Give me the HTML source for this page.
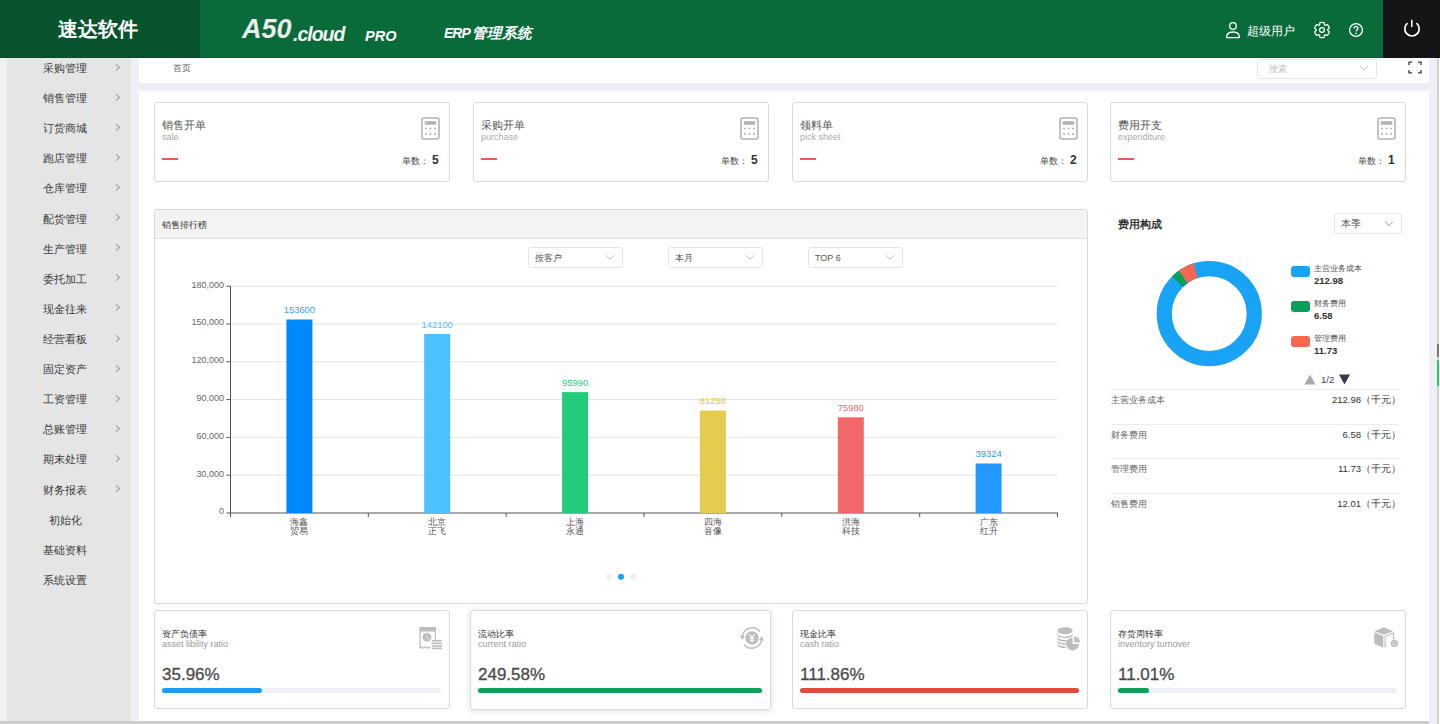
<!DOCTYPE html>
<html><head><meta charset="utf-8">
<style>
*{margin:0;padding:0;box-sizing:border-box}
html,body{width:1440px;height:724px;overflow:hidden;background:#fff;font-family:"Liberation Sans",sans-serif;color:#333}
.a{position:absolute}
#hdr{left:0;top:0;width:1440px;height:58px;background:#0a6b3a}
#logo{left:0;top:0;width:200px;height:58px;background:#07532e}
#pwr{left:1383px;top:0;width:57px;height:58px;background:#141414}
#lstrip{left:0;top:58px;width:7px;height:663px;background:#eef0f6}
#side{left:7px;top:58px;width:124px;height:663px;background:#e5e5e5}
#mstrip{left:131px;top:58px;width:8px;height:663px;background:#eef0f6}
#rstrip{left:1429px;top:58px;width:9px;height:666px;background:#eef0f6}
#rline{left:1437px;top:58px;width:2px;height:666px;background:#d0d0d0}
#botbar{left:0;top:721px;width:1429px;height:3px;background:#cdcdcd}
#bc{left:139px;top:58px;width:1290px;height:25px;background:#fff}
#gap{left:139px;top:83px;width:1290px;height:8px;background:#eceff4}
#main{left:139px;top:91px;width:1290px;height:630px;background:#fff}
.si{position:absolute;left:7px;width:124px;height:30px;font-size:11px;line-height:31px;color:#3a3a3a}
.si span{position:absolute;left:0;width:116px;text-align:center;white-space:nowrap}
.si i{position:absolute;left:107px;top:11.5px;width:5px;height:5px;border-right:1px solid #999;border-top:1px solid #999;transform:rotate(45deg)}
.card{position:absolute;border:1px solid #d9d9d9;border-radius:3px;background:#fff}
</style></head><body>
<div class="a" id="hdr"></div>
<div class="a" id="logo"></div>
<div class="a" style="left:0;top:57px;width:1383px;height:1px;background:#04612a"></div><div class="a" style="left:0;top:57px;width:200px;height:1px;background:#034d23"></div><div class="a" id="pwr"></div>

<div class="a" style="left:58px;top:16px;font-size:20px;line-height:26px;font-weight:bold;color:#fff;letter-spacing:0px">速达软件</div>
<div class="a" style="left:242px;top:14px;font-size:27px;line-height:30px;font-weight:bold;font-style:italic;color:#ececec">A50</div>
<div class="a" style="left:293px;top:23px;font-size:19.5px;line-height:22px;font-weight:bold;font-style:italic;color:#f4f4f4;letter-spacing:-1px">.cloud</div>
<div class="a" style="left:365px;top:27px;font-size:14.5px;line-height:18px;font-weight:bold;font-style:italic;color:#fff">PRO</div>
<div class="a" style="left:444px;top:24px;font-size:14px;line-height:18px;font-weight:bold;font-style:italic;color:#fff;letter-spacing:-1px">ERP</div><div class="a" style="left:472px;top:24px;font-size:14.5px;line-height:18px;font-weight:bold;font-style:italic;color:#fff">管理系统</div>
<svg class="a" style="left:1224px;top:20px" width="18" height="20" viewBox="0 0 18 20"><circle cx="9" cy="6" r="3.3" fill="none" stroke="#fff" stroke-width="1.3"/><path d="M2.6 17.6C2.6 14 5.4 12 9 12S15.4 14 15.4 17.6Z" fill="none" stroke="#fff" stroke-width="1.3" stroke-linejoin="round"/></svg>
<div class="a" style="left:1247px;top:24px;font-size:12px;line-height:14px;color:#fff">超级用户</div>
<svg class="a" style="left:1312px;top:19.5px" width="20" height="20" viewBox="0 0 20 20"><path fill="none" stroke="#fff" stroke-width="1.2" stroke-linejoin="round" d="M7.55 4.97L7.91 2.69A7.6 7.6 0 0 1 12.09 2.69L12.45 4.97A5.6 5.6 0 0 1 13.13 5.36L13.13 5.36L15.28 4.53A7.6 7.6 0 0 1 17.37 8.16L15.59 9.61A5.6 5.6 0 0 1 15.59 10.39L15.59 10.39L17.37 11.84A7.6 7.6 0 0 1 15.28 15.47L13.13 14.64A5.6 5.6 0 0 1 12.45 15.03L12.45 15.03L12.09 17.31A7.6 7.6 0 0 1 7.91 17.31L7.55 15.03A5.6 5.6 0 0 1 6.87 14.64L6.87 14.64L4.72 15.47A7.6 7.6 0 0 1 2.63 11.84L4.41 10.39A5.6 5.6 0 0 1 4.41 9.61L4.41 9.61L2.63 8.16A7.6 7.6 0 0 1 4.72 4.53L6.87 5.36A5.6 5.6 0 0 1 7.55 4.97Z"/><circle cx="10" cy="10" r="2.4" fill="none" stroke="#fff" stroke-width="1.2"/></svg>
<svg class="a" style="left:1347px;top:21px" width="18" height="18" viewBox="0 0 18 18"><circle cx="9" cy="9" r="6.4" fill="none" stroke="#fff" stroke-width="1.3"/><path d="M7 7.5c0-1.3.9-2.1 2-2.1s2 .8 2 1.9c0 1.4-1.9 1.6-1.9 3.2" fill="none" stroke="#fff" stroke-width="1.2"/><circle cx="9.1" cy="12.4" r=".8" fill="#fff"/></svg>
<svg class="a" style="left:1402px;top:18px" width="20" height="20" viewBox="0 0 20 20"><path d="M5.57 5.13A7.2 7.2 0 1 0 14.43 5.13" fill="none" stroke="#fff" stroke-width="1.7"/><path d="M9.8 1.8v7.2" stroke="#fff" stroke-width="1.5"/></svg>
<div class="a" id="lstrip"></div>
<div class="a" id="side"></div>
<div class="si" style="top:53.0px"><span>采购管理</span><i></i></div>
<div class="si" style="top:83.1px"><span>销售管理</span><i></i></div>
<div class="si" style="top:113.2px"><span>订货商城</span><i></i></div>
<div class="si" style="top:143.3px"><span>跑店管理</span><i></i></div>
<div class="si" style="top:173.4px"><span>仓库管理</span><i></i></div>
<div class="si" style="top:203.6px"><span>配货管理</span><i></i></div>
<div class="si" style="top:233.7px"><span>生产管理</span><i></i></div>
<div class="si" style="top:263.8px"><span>委托加工</span><i></i></div>
<div class="si" style="top:293.9px"><span>现金往来</span><i></i></div>
<div class="si" style="top:324.0px"><span>经营看板</span><i></i></div>
<div class="si" style="top:354.1px"><span>固定资产</span><i></i></div>
<div class="si" style="top:384.2px"><span>工资管理</span><i></i></div>
<div class="si" style="top:414.3px"><span>总账管理</span><i></i></div>
<div class="si" style="top:444.4px"><span>期末处理</span><i></i></div>
<div class="si" style="top:474.5px"><span>财务报表</span><i></i></div>
<div class="si" style="top:504.6px"><span>初始化</span></div>
<div class="si" style="top:534.8px"><span>基础资料</span></div>
<div class="si" style="top:564.9px"><span>系统设置</span></div>
<div class="a" id="mstrip"></div>
<div class="a" id="rstrip"></div>
<div class="a" id="rline"></div>
<div class="a" id="botbar"></div><div class="a" style="left:1437px;top:344px;width:2px;height:13px;background:#777"></div><div class="a" style="left:1437px;top:360px;width:2px;height:26px;background:#2cc56f"></div>
<div class="a" id="bc"></div>
<div class="a" id="gap"></div>
<div class="a" id="main"></div>

<div class="a" style="left:173px;top:62px;font-size:9px;line-height:12px;color:#666">首页</div>
<div class="a" style="left:1257px;top:59px;width:120px;height:20px;border:1px solid #e4e7ed;border-radius:3px;background:#fff"></div>
<div class="a" style="left:1269px;top:63px;font-size:9px;line-height:12px;color:#c0c4cc">搜索</div>
<svg class="a" style="left:1359px;top:65px" width="10" height="7" viewBox="0 0 10 7"><path d="M1 1.2L5 5.2 9 1.2" fill="none" stroke="#b8bcc6" stroke-width="1"/></svg>
<svg class="a" style="left:1408px;top:61px" width="14" height="13" viewBox="0 0 14 13"><path d="M1 4V1.2h3M10 1.2h3V4M13 9v2.8h-3M4 11.8H1V9" fill="none" stroke="#3a3a3a" stroke-width="1.3"/></svg>
<div class="card" style="left:154px;top:102px;width:296px;height:80px"></div>
<div class="a" style="left:162px;top:118.5px;font-size:10.5px;line-height:13px;color:#555">销售开单</div>
<div class="a" style="left:162px;top:132px;font-size:9px;line-height:11px;color:#aaa">sale</div>
<div class="a" style="left:162px;top:158px;width:16px;height:2px;background:#ec5b57"></div>
<svg class="a" style="left:421px;top:117px" width="19" height="23" viewBox="0 0 19 23"><rect x="1" y="1" width="17" height="21" rx="2" fill="none" stroke="#b3b3b3" stroke-width="1.6"/><rect x="3.8" y="4.2" width="11.5" height="3.6" fill="#b3b3b3"/><g fill="#b3b3b3"><circle cx="5" cy="11.6" r="1"/><circle cx="9.5" cy="11.6" r="1"/><circle cx="14" cy="11.6" r="1"/><circle cx="5" cy="17" r="1"/><circle cx="9.5" cy="17" r="1"/><circle cx="14" cy="17" r="1"/></g></svg><div class="a" style="left:402px;top:155px;font-size:9px;line-height:12px;color:#444">单数：</div>
<div class="a" style="left:432px;top:153px;font-size:12px;line-height:14px;font-weight:bold;color:#333">5</div>
<div class="card" style="left:473px;top:102px;width:296px;height:80px"></div>
<div class="a" style="left:481px;top:118.5px;font-size:10.5px;line-height:13px;color:#555">采购开单</div>
<div class="a" style="left:481px;top:132px;font-size:9px;line-height:11px;color:#aaa">purchase</div>
<div class="a" style="left:481px;top:158px;width:16px;height:2px;background:#ec5b57"></div>
<svg class="a" style="left:740px;top:117px" width="19" height="23" viewBox="0 0 19 23"><rect x="1" y="1" width="17" height="21" rx="2" fill="none" stroke="#b3b3b3" stroke-width="1.6"/><rect x="3.8" y="4.2" width="11.5" height="3.6" fill="#b3b3b3"/><g fill="#b3b3b3"><circle cx="5" cy="11.6" r="1"/><circle cx="9.5" cy="11.6" r="1"/><circle cx="14" cy="11.6" r="1"/><circle cx="5" cy="17" r="1"/><circle cx="9.5" cy="17" r="1"/><circle cx="14" cy="17" r="1"/></g></svg><div class="a" style="left:721px;top:155px;font-size:9px;line-height:12px;color:#444">单数：</div>
<div class="a" style="left:751px;top:153px;font-size:12px;line-height:14px;font-weight:bold;color:#333">5</div>
<div class="card" style="left:792px;top:102px;width:296px;height:80px"></div>
<div class="a" style="left:800px;top:118.5px;font-size:10.5px;line-height:13px;color:#555">领料单</div>
<div class="a" style="left:800px;top:132px;font-size:9px;line-height:11px;color:#aaa">pick sheet</div>
<div class="a" style="left:800px;top:158px;width:16px;height:2px;background:#ec5b57"></div>
<svg class="a" style="left:1059px;top:117px" width="19" height="23" viewBox="0 0 19 23"><rect x="1" y="1" width="17" height="21" rx="2" fill="none" stroke="#b3b3b3" stroke-width="1.6"/><rect x="3.8" y="4.2" width="11.5" height="3.6" fill="#b3b3b3"/><g fill="#b3b3b3"><circle cx="5" cy="11.6" r="1"/><circle cx="9.5" cy="11.6" r="1"/><circle cx="14" cy="11.6" r="1"/><circle cx="5" cy="17" r="1"/><circle cx="9.5" cy="17" r="1"/><circle cx="14" cy="17" r="1"/></g></svg><div class="a" style="left:1040px;top:155px;font-size:9px;line-height:12px;color:#444">单数：</div>
<div class="a" style="left:1070px;top:153px;font-size:12px;line-height:14px;font-weight:bold;color:#333">2</div>
<div class="card" style="left:1110px;top:102px;width:296px;height:80px"></div>
<div class="a" style="left:1118px;top:118.5px;font-size:10.5px;line-height:13px;color:#555">费用开支</div>
<div class="a" style="left:1118px;top:132px;font-size:9px;line-height:11px;color:#aaa">expenditure</div>
<div class="a" style="left:1118px;top:158px;width:16px;height:2px;background:#ec5b57"></div>
<svg class="a" style="left:1377px;top:117px" width="19" height="23" viewBox="0 0 19 23"><rect x="1" y="1" width="17" height="21" rx="2" fill="none" stroke="#b3b3b3" stroke-width="1.6"/><rect x="3.8" y="4.2" width="11.5" height="3.6" fill="#b3b3b3"/><g fill="#b3b3b3"><circle cx="5" cy="11.6" r="1"/><circle cx="9.5" cy="11.6" r="1"/><circle cx="14" cy="11.6" r="1"/><circle cx="5" cy="17" r="1"/><circle cx="9.5" cy="17" r="1"/><circle cx="14" cy="17" r="1"/></g></svg><div class="a" style="left:1358px;top:155px;font-size:9px;line-height:12px;color:#444">单数：</div>
<div class="a" style="left:1388px;top:153px;font-size:12px;line-height:14px;font-weight:bold;color:#333">1</div>
<div class="a" style="left:154px;top:209px;width:934px;height:395px;border:1px solid #d9d9d9;border-radius:3px;background:#fff"></div>
<div class="a" style="left:155px;top:210px;width:932px;height:29px;background:#f3f3f3;border-bottom:1px solid #dcdcdc;border-radius:2px 2px 0 0"></div>
<div class="a" style="left:162px;top:219px;font-size:9px;line-height:12px;color:#333">销售排行榜</div>
<div class="a" style="left:528px;top:247px;width:95px;height:21px;border:1px solid #e1e4ea;border-radius:3px;background:#fff"></div>
<div class="a" style="left:535px;top:252px;font-size:9px;line-height:12px;color:#555">按客户</div>
<svg class="a" style="left:605px;top:254px" width="10" height="7" viewBox="0 0 10 7"><path d="M.8 1.2L5 5.4 9.2 1.2" fill="none" stroke="#b8bcc6" stroke-width="1"/></svg>
<div class="a" style="left:668px;top:247px;width:95px;height:21px;border:1px solid #e1e4ea;border-radius:3px;background:#fff"></div>
<div class="a" style="left:675px;top:252px;font-size:9px;line-height:12px;color:#555">本月</div>
<svg class="a" style="left:745px;top:254px" width="10" height="7" viewBox="0 0 10 7"><path d="M.8 1.2L5 5.4 9.2 1.2" fill="none" stroke="#b8bcc6" stroke-width="1"/></svg>
<div class="a" style="left:808px;top:247px;width:95px;height:21px;border:1px solid #e1e4ea;border-radius:3px;background:#fff"></div>
<div class="a" style="left:815px;top:252px;font-size:9px;line-height:12px;color:#555">TOP 6</div>
<svg class="a" style="left:885px;top:254px" width="10" height="7" viewBox="0 0 10 7"><path d="M.8 1.2L5 5.4 9.2 1.2" fill="none" stroke="#b8bcc6" stroke-width="1"/></svg>
<svg class="a" style="left:154px;top:270px" width="934" height="330" viewBox="154 270 934 330">
<line x1="226.5" x2="230.5" y1="513.0" y2="513.0" stroke="#555" stroke-width="1"/>
<text x="224" y="514.4" text-anchor="end" font-size="9" fill="#666">0</text>
<line x1="230.5" x2="1057.5" y1="475.2" y2="475.2" stroke="#e3e3e3" stroke-width="1"/>
<line x1="226.5" x2="230.5" y1="475.2" y2="475.2" stroke="#555" stroke-width="1"/>
<text x="224" y="476.6" text-anchor="end" font-size="9" fill="#666">30,000</text>
<line x1="230.5" x2="1057.5" y1="437.4" y2="437.4" stroke="#e3e3e3" stroke-width="1"/>
<line x1="226.5" x2="230.5" y1="437.4" y2="437.4" stroke="#555" stroke-width="1"/>
<text x="224" y="438.8" text-anchor="end" font-size="9" fill="#666">60,000</text>
<line x1="230.5" x2="1057.5" y1="399.6" y2="399.6" stroke="#e3e3e3" stroke-width="1"/>
<line x1="226.5" x2="230.5" y1="399.6" y2="399.6" stroke="#555" stroke-width="1"/>
<text x="224" y="401.0" text-anchor="end" font-size="9" fill="#666">90,000</text>
<line x1="230.5" x2="1057.5" y1="361.8" y2="361.8" stroke="#e3e3e3" stroke-width="1"/>
<line x1="226.5" x2="230.5" y1="361.8" y2="361.8" stroke="#555" stroke-width="1"/>
<text x="224" y="363.2" text-anchor="end" font-size="9" fill="#666">120,000</text>
<line x1="230.5" x2="1057.5" y1="324.0" y2="324.0" stroke="#e3e3e3" stroke-width="1"/>
<line x1="226.5" x2="230.5" y1="324.0" y2="324.0" stroke="#555" stroke-width="1"/>
<text x="224" y="325.4" text-anchor="end" font-size="9" fill="#666">150,000</text>
<line x1="230.5" x2="1057.5" y1="286.2" y2="286.2" stroke="#e3e3e3" stroke-width="1"/>
<line x1="226.5" x2="230.5" y1="286.2" y2="286.2" stroke="#555" stroke-width="1"/>
<text x="224" y="287.6" text-anchor="end" font-size="9" fill="#666">180,000</text>
<line x1="230.5" x2="230.5" y1="286" y2="513.0" stroke="#555" stroke-width="1"/>
<line x1="230" x2="1058" y1="513.0" y2="513.0" stroke="#555" stroke-width="1.2"/>
<line x1="230.5" x2="230.5" y1="513.0" y2="517.0" stroke="#555" stroke-width="1"/>
<line x1="368.3" x2="368.3" y1="513.0" y2="517.0" stroke="#555" stroke-width="1"/>
<line x1="506.2" x2="506.2" y1="513.0" y2="517.0" stroke="#555" stroke-width="1"/>
<line x1="644.0" x2="644.0" y1="513.0" y2="517.0" stroke="#555" stroke-width="1"/>
<line x1="781.8" x2="781.8" y1="513.0" y2="517.0" stroke="#555" stroke-width="1"/>
<line x1="919.7" x2="919.7" y1="513.0" y2="517.0" stroke="#555" stroke-width="1"/>
<line x1="1057.5" x2="1057.5" y1="513.0" y2="517.0" stroke="#555" stroke-width="1"/>
<rect x="286.4" y="319.5" width="26" height="193.5" fill="#0088ff"/>
<text x="299.4" y="313.0" text-anchor="middle" font-size="9.4" fill="#3aa3ff">153600</text>
<text x="299.4" y="525" text-anchor="middle" font-size="9" fill="#555">海鑫</text>
<text x="299.4" y="534" text-anchor="middle" font-size="9" fill="#555">贸易</text>
<rect x="424.2" y="334.0" width="26" height="179.0" fill="#4dc0ff"/>
<text x="437.2" y="327.5" text-anchor="middle" font-size="9.4" fill="#52bdf7">142100</text>
<text x="437.2" y="525" text-anchor="middle" font-size="9" fill="#555">北京</text>
<text x="437.2" y="534" text-anchor="middle" font-size="9" fill="#555">正飞</text>
<rect x="562.1" y="392.1" width="26" height="120.9" fill="#22cc7a"/>
<text x="575.1" y="385.6" text-anchor="middle" font-size="9.4" fill="#2ccc7c">95990</text>
<text x="575.1" y="525" text-anchor="middle" font-size="9" fill="#555">上海</text>
<text x="575.1" y="534" text-anchor="middle" font-size="9" fill="#555">永通</text>
<rect x="699.9" y="410.6" width="26" height="102.4" fill="#e6cc4c"/>
<text x="712.9" y="404.1" text-anchor="middle" font-size="9.4" fill="#e8c350">81258</text>
<text x="712.9" y="525" text-anchor="middle" font-size="9" fill="#555">四海</text>
<text x="712.9" y="534" text-anchor="middle" font-size="9" fill="#555">音像</text>
<rect x="837.8" y="417.3" width="26" height="95.7" fill="#f26868"/>
<text x="850.8" y="410.8" text-anchor="middle" font-size="9.4" fill="#f06a6a">75980</text>
<text x="850.8" y="525" text-anchor="middle" font-size="9" fill="#555">洪海</text>
<text x="850.8" y="534" text-anchor="middle" font-size="9" fill="#555">科技</text>
<rect x="975.6" y="463.5" width="26" height="49.5" fill="#2299ff"/>
<text x="988.6" y="457.0" text-anchor="middle" font-size="9.4" fill="#2a9bf5">39324</text>
<text x="988.6" y="525" text-anchor="middle" font-size="9" fill="#555">广东</text>
<text x="988.6" y="534" text-anchor="middle" font-size="9" fill="#555">红升</text>
<circle cx="609" cy="576.7" r="3" fill="#eef0f3"/><circle cx="621" cy="576.7" r="3" fill="#1aa0ff"/><circle cx="633" cy="576.7" r="3" fill="#eef0f3"/>
</svg>

<div class="a" style="left:1118px;top:218px;font-size:10.5px;line-height:13px;font-weight:bold;color:#333">费用构成</div>
<div class="a" style="left:1334px;top:213px;width:68px;height:21px;border:1px solid #e1e4ea;border-radius:3px;background:#fff"></div>
<div class="a" style="left:1341px;top:218px;font-size:10px;line-height:12px;color:#555">本季</div>
<div class="a" style="left:1386px;top:219px;width:6px;height:6px;border-right:1px solid #b4b8c0;border-bottom:1px solid #b4b8c0;transform:rotate(45deg)"></div>
<svg class="a" style="left:1150px;top:255px" width="120" height="120" viewBox="0 0 120 120">
<g transform="translate(59.25 58.65)">
<circle r="45" fill="none" stroke="#18a3f5" stroke-width="15.2"/>
<path d="M-37.25 -37.42A52.8 52.8 0 0 1 -30.38 -43.18L-21.63 -30.75A37.6 37.6 0 0 0 -26.52 -26.65Z" fill="#0ba05a"/><path d="M-30.38 -43.18A52.8 52.8 0 0 1 -16.11 -50.28L-11.48 -35.81A37.6 37.6 0 0 0 -21.63 -30.75Z" fill="#f5674f"/>
</g></svg>
<div class="a" style="left:1291px;top:266px;width:19px;height:11px;border-radius:3px;background:#18a3f5"></div>
<div class="a" style="left:1314px;top:263px;font-size:8px;line-height:11px;color:#555">主营业务成本</div>
<div class="a" style="left:1314px;top:275px;font-size:9.5px;line-height:12px;font-weight:bold;color:#333">212.98</div>
<div class="a" style="left:1291px;top:301px;width:19px;height:11px;border-radius:3px;background:#0ba05a"></div>
<div class="a" style="left:1314px;top:298px;font-size:8px;line-height:11px;color:#555">财务费用</div>
<div class="a" style="left:1314px;top:310px;font-size:9.5px;line-height:12px;font-weight:bold;color:#333">6.58</div>
<div class="a" style="left:1291px;top:336px;width:19px;height:11px;border-radius:3px;background:#f5674f"></div>
<div class="a" style="left:1314px;top:333px;font-size:8px;line-height:11px;color:#555">管理费用</div>
<div class="a" style="left:1314px;top:345px;font-size:9.5px;line-height:12px;font-weight:bold;color:#333">11.73</div>
<svg class="a" style="left:1303px;top:373px" width="50" height="13" viewBox="0 0 50 13"><path d="M1.5 11.5L7 1.5L12.5 11.5Z" fill="#aaa"/><path d="M36 1.5L47 1.5L41.5 11.5Z" fill="#2f3a4a"/></svg>
<div class="a" style="left:1321px;top:374px;font-size:9.5px;line-height:12px;color:#444">1/2</div>
<div class="a" style="left:1111px;top:389px;width:288px;height:1px;background:#ececec"></div>
<div class="a" style="left:1111px;top:394px;font-size:9px;line-height:12px;color:#666">主营业务成本</div>
<div class="a" style="left:1200px;width:201px;text-align:right;top:394px;font-size:9.5px;line-height:12px;color:#333">212.98（千元）</div>
<div class="a" style="left:1111px;top:424px;width:288px;height:1px;background:#ececec"></div>
<div class="a" style="left:1111px;top:429px;font-size:9px;line-height:12px;color:#666">财务费用</div>
<div class="a" style="left:1200px;width:201px;text-align:right;top:429px;font-size:9.5px;line-height:12px;color:#333">6.58（千元）</div>
<div class="a" style="left:1111px;top:458px;width:288px;height:1px;background:#ececec"></div>
<div class="a" style="left:1111px;top:463px;font-size:9px;line-height:12px;color:#666">管理费用</div>
<div class="a" style="left:1200px;width:201px;text-align:right;top:463px;font-size:9.5px;line-height:12px;color:#333">11.73（千元）</div>
<div class="a" style="left:1111px;top:493px;width:288px;height:1px;background:#ececec"></div>
<div class="a" style="left:1111px;top:498px;font-size:9px;line-height:12px;color:#666">销售费用</div>
<div class="a" style="left:1200px;width:201px;text-align:right;top:498px;font-size:9.5px;line-height:12px;color:#333">12.01（千元）</div>
<div class="card" style="left:154px;top:610px;width:296px;height:99px;"></div>
<div class="a" style="left:162px;top:628px;font-size:9px;line-height:12px;color:#333">资产负债率</div>
<div class="a" style="left:162px;top:639px;font-size:9px;line-height:11px;color:#999">asset libility ratio</div>
<div class="a" style="left:162px;top:665px;font-size:17px;line-height:19px;color:#4a4a4a;-webkit-text-stroke:0.3px #4a4a4a">35.96%</div>
<div class="a" style="left:162px;top:688px;width:279px;height:5px;border-radius:3px;background:#eef0f5"></div>
<div class="a" style="left:162px;top:688px;width:100.3px;height:5px;border-radius:3px;background:#1a9cf5"></div>
<svg class="a" style="left:419px;top:627px" width="24" height="24" viewBox="0 0 24 24"><g fill="#bdbdbd"><rect x="0.5" y="0" width="16.5" height="4.6"/><rect x="0.5" y="4" width="1.2" height="17"/><rect x="15.8" y="4" width="1.2" height="8"/><path d="M8 5.8a4.4 4.4 0 1 0 .01 0z"/><path d="M0.5 20.5l2-1.5 2 1.6 2-1.6 2 1.6 2-1.6 1 .8v1.4l-1-.8-2 1.6-2-1.6-2 1.6-2-1.6-2 1.5z"/><rect x="13" y="13" width="10" height="1.6"/><rect x="12.5" y="15.6" width="10" height="1.6"/><rect x="13" y="18.2" width="10" height="1.6"/><rect x="13" y="20.6" width="10" height="1.6"/></g><path d="M8 7.5v3l2.5 2" stroke="#fff" stroke-width=".6" fill="none"/></svg>
<div class="card" style="left:470px;top:609.5px;width:301px;height:100.5px;box-shadow:0 1px 7px rgba(0,0,0,.13);"></div>
<div class="a" style="left:478px;top:628px;font-size:9px;line-height:12px;color:#333">流动比率</div>
<div class="a" style="left:478px;top:639px;font-size:9px;line-height:11px;color:#999">current ratio</div>
<div class="a" style="left:478px;top:665px;font-size:17px;line-height:19px;color:#4a4a4a;-webkit-text-stroke:0.3px #4a4a4a">249.58%</div>
<div class="a" style="left:478px;top:688px;width:284px;height:5px;border-radius:3px;background:#eef0f5"></div>
<div class="a" style="left:478px;top:688px;width:284.0px;height:5px;border-radius:3px;background:#0ea05a"></div>
<svg class="a" style="left:739px;top:625px" width="26" height="26" viewBox="0 0 26 26"><g fill="none" stroke="#bdbdbd" stroke-width="1.5"><path d="M3.3 11.5A10 10 0 0 1 21 6.5"/><path d="M22.7 14.5A10 10 0 0 1 5 19.5"/></g><path d="M0.8 10.5l2.6 4.4 2.6-4.2z" fill="#bdbdbd"/><path d="M25.2 15.5l-2.6-4.4-2.6 4.2z" fill="#bdbdbd"/><circle cx="13" cy="13" r="6.7" fill="#bdbdbd"/><path d="M10.3 9.3l2.7 3.5 2.7-3.5M13 12.8v4.4M10.6 13.3h4.8M10.6 15.2h4.8" stroke="#fff" stroke-width="1.1" fill="none"/></svg>
<div class="card" style="left:792px;top:610px;width:296px;height:99px;"></div>
<div class="a" style="left:800px;top:628px;font-size:9px;line-height:12px;color:#333">现金比率</div>
<div class="a" style="left:800px;top:639px;font-size:9px;line-height:11px;color:#999">cash ratio</div>
<div class="a" style="left:800px;top:665px;font-size:17px;line-height:19px;color:#4a4a4a;-webkit-text-stroke:0.3px #4a4a4a">111.86%</div>
<div class="a" style="left:800px;top:688px;width:279px;height:5px;border-radius:3px;background:#eef0f5"></div>
<div class="a" style="left:800px;top:688px;width:279.0px;height:5px;border-radius:3px;background:#e04b3b"></div>
<svg class="a" style="left:1057px;top:627px" width="24" height="24" viewBox="0 0 24 24"><g fill="#bdbdbd"><ellipse cx="8" cy="3.8" rx="7.7" ry="3.5"/><path d="M0.3 6.3c0 2 3.4 3.4 7.7 3.4s7.7-1.4 7.7-3.4v1.5c0 2-3.4 3.4-7.7 3.4S0.3 9.8.3 7.8z"/><path d="M0.3 9.5c0 2 3.4 3.4 7.7 3.4 1.2 0 2.3-.1 3.3-.3-.7.6-1.2 1.2-1.6 1.9-.5 0-1.1.1-1.7.1C3.7 14.6.3 13.2.3 11.2z"/><path d="M0.3 12.8c0 2 3.4 3.4 7.7 3.4h.8l-.2 1.7H8c-4.3 0-7.7-1.4-7.7-3.4z"/><path d="M0.3 16c0 2 3.4 3.4 7.7 3.4h.7l.3 1.7H8c-4.3 0-7.7-1.4-7.7-3.4z"/><path d="M15.6 10.6a6.4 6.4 0 1 0 6.4 6.4h-6.4z"/><path d="M17.2 9.6v6h6a6 6 0 0 0-6-6z"/></g></svg>
<div class="card" style="left:1110px;top:610px;width:296px;height:99px;"></div>
<div class="a" style="left:1118px;top:628px;font-size:9px;line-height:12px;color:#333">存货周转率</div>
<div class="a" style="left:1118px;top:639px;font-size:9px;line-height:11px;color:#999">inventory turnover</div>
<div class="a" style="left:1118px;top:665px;font-size:17px;line-height:19px;color:#4a4a4a;-webkit-text-stroke:0.3px #4a4a4a">11.01%</div>
<div class="a" style="left:1118px;top:688px;width:279px;height:5px;border-radius:3px;background:#eef0f5"></div>
<div class="a" style="left:1118px;top:688px;width:30.7px;height:5px;border-radius:3px;background:#0ea05a"></div>
<svg class="a" style="left:1374px;top:627px" width="26" height="24" viewBox="0 0 26 24"><g fill="#bdbdbd"><path d="M9.8 0.3L0.5 4.2l9.4 3.6 9.4-3.6z"/><path d="M0.3 5.3v11.5l9 3.6V8.9z"/><path d="M10.6 8.9v11.5l1.7-.7v-1.4l-.6.3V9.7l7.3-2.8v5.6h1.2V5.3z"/></g><circle cx="20.4" cy="16.4" r="3.7" fill="#c2c2c2"/><circle cx="20.4" cy="16.4" r="2" fill="none" stroke="#e6e6e6" stroke-width=".6"/></svg>
</body></html>
